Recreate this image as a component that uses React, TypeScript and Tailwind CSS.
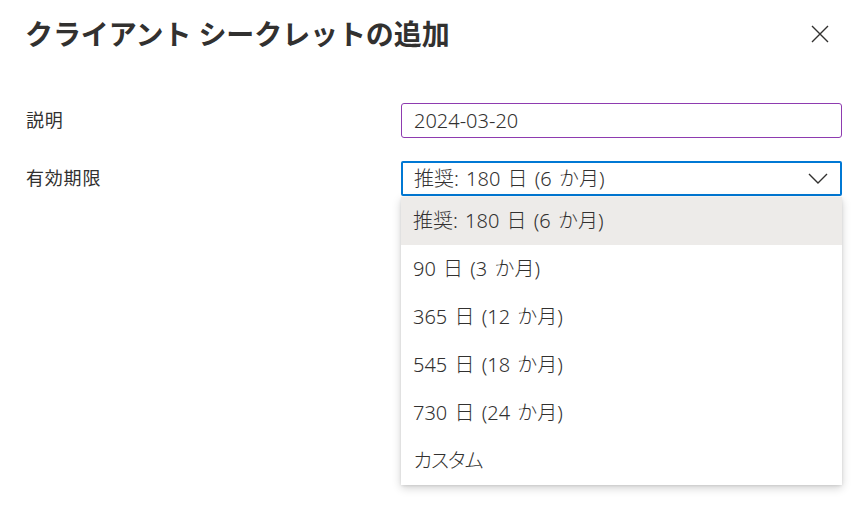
import { useState } from 'react';

const options = [
  '推奨: 180 日 (6 か月)',
  '90 日 (3 か月)',
  '365 日 (12 か月)',
  '545 日 (18 か月)',
  '730 日 (24 か月)',
  'カスタム',
];

export default function App() {
  const [selected] = useState(0);

  return (
    <div
      className="relative w-[864px] h-[508px] bg-white text-[#323130] overflow-hidden"
      style={{ fontFamily: '"Noto Sans", "Noto Sans CJK JP", sans-serif' }}
    >
      {/* Header */}
      <div className="flex items-start justify-between pl-[25px] pr-[34px] pt-[12px]">
        <h1 className="text-[28px] font-bold leading-[44px] tracking-[-0.1px]">
          クライアント シークレットの追加
        </h1>
        <button className="mt-[12px] w-[20px] h-[20px] flex items-center justify-center text-[#323130]">
          <svg width="18" height="18" viewBox="0 0 18 18" fill="none" stroke="currentColor" strokeWidth={1.4}>
            <path d="M1 1 L17 17 M17 1 L1 17" />
          </svg>
        </button>
      </div>

      {/* Form */}
      <div className="flex flex-col gap-[23px] pl-[26px] pr-[22px] mt-[47px]">
        <div className="flex items-center">
          <label className="w-[375px] text-[18px] tracking-[0.8px]">説明</label>
          <div className="flex-1 h-[35px] border border-[#8e3bb0] rounded-[3px] flex items-center px-[12px] text-[20px] font-light">
            2024-03-20
          </div>
        </div>

        <div className="flex items-start">
          <label className="w-[375px] text-[18px] leading-[35px] tracking-[0.8px]">有効期限</label>
          <div className="flex-1 relative">
            <div className="h-[35px] border-2 border-[#0078d4] rounded-[2px] flex items-center justify-between pl-[11px] pr-[12px] text-[20px] font-light [word-spacing:2px]">
              <span>{options[selected]}</span>
              <svg width="20" height="12" viewBox="0 0 20 12" fill="none" stroke="#323130" strokeWidth={1.4}>
                <path d="M1 1 L10 10 L19 1" />
              </svg>
            </div>

            {/* Dropdown list */}
            <div className="absolute left-0 right-0 top-[36px] bg-white rounded-[2px] shadow-[0_3px_10px_rgba(0,0,0,0.18),0_1px_3px_rgba(0,0,0,0.1)]">
              {options.map((opt, i) => (
                <div
                  key={opt}
                  className={`h-[48px] flex items-center px-[12px] text-[20px] font-light [word-spacing:2px] ${
                    i === selected ? 'bg-[#edebe9]' : 'bg-white'
                  } ${opt === 'カスタム' ? 'tracking-[-3px]' : ''}`}
                >
                  {opt}
                </div>
              ))}
            </div>
          </div>
        </div>
      </div>
    </div>
  );
}
